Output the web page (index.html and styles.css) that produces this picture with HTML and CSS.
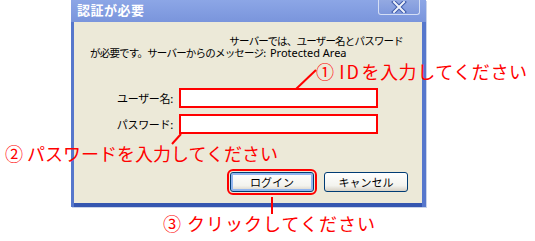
FILE: index.html
```html
<!DOCTYPE html>
<html lang="ja">
<head>
  <meta charset="UTF-8" />
  <title>認証が必要</title>
  <link rel="stylesheet" href="styles.css">
</head>
<body>
  <div class="stage">
    <div class="window">
      <div class="titlebar">
        <span class="title">認証が必要</span>
        <span class="close">
          <svg width="16" height="12" viewBox="0 0 16 12">
            <path d="M3 1 L13 11 M13 1 L3 11" stroke="#3d5aa8" stroke-width="4" stroke-linecap="square"/>
            <path d="M3 1 L13 11 M13 1 L3 11" stroke="#eef2fb" stroke-width="2" stroke-linecap="square"/>
          </svg>
        </span>
      </div>
      <div class="dialog-body">
        <div class="message">
          <div class="line-1">サーバーでは、ユーザー名とパスワード</div>
          <div>が必要です。サーバーからのメッセージ: <span class="latin">Protected Area</span></div>
        </div>
        <div class="login-form">
          <label for="user">ユーザー名:</label>
          <input type="text" id="user" class="field">
          <label for="pass">パスワード:</label>
          <input type="password" id="pass" class="field">
        </div>
        <div class="buttons">
          <button class="btn btn-login">ログイン</button>
          <button class="btn">キャンセル</button>
        </div>
      </div>
    </div>

    <!-- annotations -->
    <svg class="leaders" width="535" height="241">
      <line x1="296" y1="89" x2="316" y2="70" stroke="#ff0000" stroke-width="2"/>
      <line x1="181" y1="134" x2="172" y2="144" stroke="#ff0000" stroke-width="2"/>
      <line x1="272" y1="197" x2="272" y2="214" stroke="#ff0000" stroke-width="2"/>
    </svg>
    <div class="note note-1">① <span class="wide">ID</span>を入力してください</div>
    <div class="note note-2">② パスワードを入力してください</div>
    <div class="note note-3">③ クリックしてください</div>
  </div>
</body>
</html>
```

FILE: styles.css
```css
body { margin: 0; background: #fff; font-family: "Noto Sans CJK JP", "Noto Sans", sans-serif; }
.stage { position: relative; width: 535px; height: 241px; overflow: hidden; }

.window { margin-left: 71px; width: 355px; background: #5677cc; box-shadow: 1px 1px 0 #c9d3ea; }
.titlebar { height: 22px; display: flex; align-items: flex-start; justify-content: space-between; background: linear-gradient(#8ca6e6, #7a95dc); padding-left: 6px; }
.title { color: #fff; font-weight: bold; font-size: 13px; line-height: 20px; letter-spacing: 0.5px; }
.close { width: 40px; height: 14px; margin-right: 6px; border: 1px solid #d4def5; border-top: none; border-radius: 0 0 3px 3px; background: linear-gradient(#93a9e2, #7e98dc); display: flex; align-items: center; justify-content: center; }

.dialog-body { height: 181px; margin: 0 4px 0 3px; background: #ece9d8; font-size: 11px; color: #000; border-bottom: 4px solid #3556b0; }
.message { padding: 13px 19px 0 16px; font-size: 10.5px; line-height: 12px; letter-spacing: -0.8px; white-space: nowrap; }
.line-1 { text-align: right; }
.latin { margin-left: 3px; font-family: "Noto Sans", sans-serif; font-size: 11px; letter-spacing: 0; }

.login-form { display: grid; grid-template-columns: 99px 199px; column-gap: 6px; row-gap: 6px; align-items: center; margin-top: 29px; }
.login-form label { text-align: right; font-size: 11px; letter-spacing: -0.3px; }
.field { box-sizing: border-box; height: 20px; width: 199px; margin: 0; border: 2px solid #ff0000; background: #fff; padding: 0; }

.buttons { display: flex; justify-content: flex-end; gap: 10px; padding-right: 14px; margin-top: 38px; }
.btn { box-sizing: border-box; width: 84px; height: 20px; padding: 0; border: 1px solid #003c74; border-radius: 3px; background: linear-gradient(#ffffff, #f3f3ee 70%, #d6d0c5); font-family: inherit; font-size: 11px; color: #000; }
.btn-login { box-shadow: inset 0 0 0 2px #92b5ef; outline: 2px solid #ff0000; outline-offset: 1px; }

.leaders { position: absolute; left: 0; top: 0; }
.note { position: absolute; color: #ff0000; font-size: 18px; line-height: 18px; white-space: nowrap; text-align: justify; text-align-last: justify; }
.wide { letter-spacing: 2px; }
.note-1 { left: 316px; top: 62px; width: 211px; }
.note-2 { left: 5px; top: 144px; width: 270px; }
.note-3 { left: 163px; top: 214px; width: 212px; }
```
